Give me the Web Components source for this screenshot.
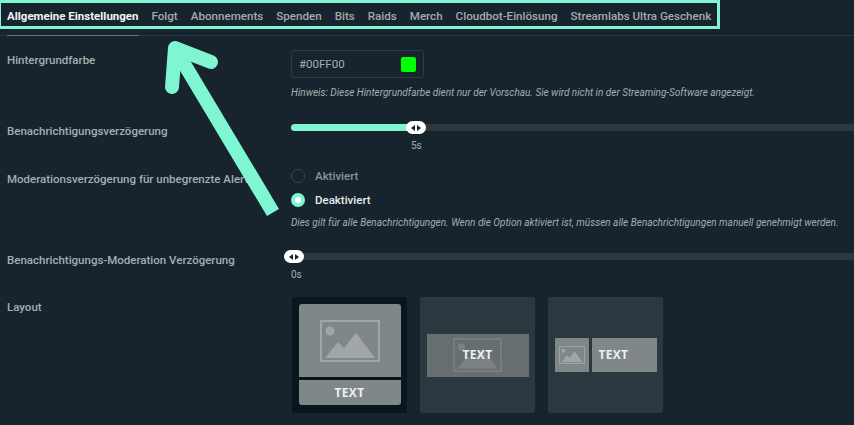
<!DOCTYPE html>
<html lang="de">
<head>
<meta charset="utf-8">
<title>Allgemeine Einstellungen</title>
<style>
  html, body { margin: 0; padding: 0; background: #17242d; }
  body { font-family: Roboto, "Liberation Sans", sans-serif; }
</style>
</head>
<body>

<x-page>
  <x-tabs>
    <x-tab active>Allgemeine Einstellungen</x-tab>
    <x-tab>Folgt</x-tab>
    <x-tab>Abonnements</x-tab>
    <x-tab>Spenden</x-tab>
    <x-tab>Bits</x-tab>
    <x-tab>Raids</x-tab>
    <x-tab>Merch</x-tab>
    <x-tab>Cloudbot-Einlösung</x-tab>
    <x-tab>Streamlabs Ultra Geschenk</x-tab>
  </x-tabs>

  <x-row label="Hintergrundfarbe" style="margin-top:14px">
    <x-color-input value="#00FF00"></x-color-input>
    <x-hint style="margin-top:8px">Hinweis: Diese Hintergrundfarbe dient nur der Vorschau. Sie wird nicht in der Streaming-Software angezeigt.</x-hint>
  </x-row>

  <x-row label="Benachrichtigungsverzögerung" style="margin-top:21px">
    <x-slider percent="125" value="5s"></x-slider>
  </x-row>

  <x-row label="Moderationsverzögerung für unbegrenzte Alerts" style="margin-top:16px">
    <x-radio>Aktiviert</x-radio>
    <x-radio checked style="margin-top:10px">Deaktiviert</x-radio>
    <x-hint style="margin-top:9px">Dies gilt für alle Benachrichtigungen. Wenn die Option aktiviert ist, müssen alle Benachrichtigungen manuell genehmigt werden.</x-hint>
  </x-row>

  <x-row label="Benachrichtigungs-Moderation Verzögerung" style="margin-top:20px">
    <x-slider percent="0" value="0s"></x-slider>
  </x-row>

  <x-row label="Layout" style="margin-top:15px">
    <x-layout-picker>
      <x-layout-card variant="above" selected></x-layout-card>
      <x-layout-card variant="banner"></x-layout-card>
      <x-layout-card variant="side"></x-layout-card>
    </x-layout-picker>
  </x-row>

  <x-arrow></x-arrow>
</x-page>

<script>
// small landscape picture used by all three layout previews
function pictureIcon(opacity) {
  return `<svg viewBox="0 0 60 42" fill="none" style="display:block;width:100%;height:100%;opacity:${opacity}">
    <rect x="1" y="1" width="58" height="40" stroke="#a1a7a9" stroke-width="2"/>
    <circle cx="10" cy="11" r="4.5" fill="#a1a7a9"/>
    <path d="M5 38 L18 22 L24 28 L36 13 L55 38 Z" fill="#a1a7a9"/>
  </svg>`;
}

class XPage extends HTMLElement {
  constructor() {
    super();
    this.attachShadow({ mode: 'open' }).innerHTML = `
<style>
  :host { display: block; position: relative; width: 854px; height: 425px; overflow: hidden; background: #17242d; }
</style>
<slot></slot>`;
  }
}

class XTabs extends HTMLElement {
  constructor() {
    super();
    this.attachShadow({ mode: 'open' }).innerHTML = `
<style>
  :host { display: flex; position: relative; height: 35px; padding-left: 7px; gap: 13px; border-bottom: 1px solid #2a373f; }
  .highlight { position: absolute; left: 0; top: 0; width: 720px; height: 29px; box-sizing: border-box; border: solid #7ff5d2; border-width: 3px 3px 3px 1.5px; pointer-events: none; }
</style>
<slot></slot>
<div class="highlight"></div>`;
  }
}

class XTab extends HTMLElement {
  constructor() {
    super();
    this.attachShadow({ mode: 'open' }).innerHTML = `
<style>
  :host { display: block; height: 36px; box-sizing: border-box; padding-top: 9px; font: 500 11.6px/14px Roboto, sans-serif; color: #a3aaae; white-space: nowrap; }
  :host([active]) { font: 700 11.5px/14px Roboto, sans-serif; color: #f2f4f4; border-bottom: 1px solid #6a757b; }
</style>
<slot></slot>`;
  }
}

class XRow extends HTMLElement {
  constructor() {
    super();
    this.attachShadow({ mode: 'open' }).innerHTML = `
<style>
  :host { display: grid; grid-template-columns: 284px 1fr; padding-left: 7px; }
  .label { padding-top: 3px; font: 500 11.5px/14px Roboto, sans-serif; color: #a6adb1; white-space: nowrap; }
</style>
<div class="label"></div>
<div class="value"><slot></slot></div>`;
    this.shadowRoot.querySelector('.label').textContent = this.getAttribute('label');
  }
}

class XColorInput extends HTMLElement {
  constructor() {
    super();
    const value = this.getAttribute('value');
    this.attachShadow({ mode: 'open' }).innerHTML = `
<style>
  :host { display: flex; align-items: center; justify-content: space-between; box-sizing: border-box; width: 133px; height: 28px; padding: 0 7px; border: 1px solid #2e3b43; border-radius: 3px; font: 400 11.5px/14px Roboto, sans-serif; color: #a6adb1; }
  .swatch { width: 15px; height: 15px; border-radius: 2px; background: #00ff00; }
</style>
<span>${value}</span>
<span class="swatch"></span>`;
  }
}

class XHint extends HTMLElement {
  constructor() {
    super();
    this.attachShadow({ mode: 'open' }).innerHTML = `
<style>
  :host { display: block; font: italic 400 10px/14px Roboto, sans-serif; color: #a6adb1; white-space: nowrap; }
</style>
<slot></slot>`;
  }
}

class XSlider extends HTMLElement {
  constructor() {
    super();
    const px = Number(this.getAttribute('percent'));
    this.attachShadow({ mode: 'open' }).innerHTML = `
<style>
  :host { display: block; }
  .track { position: relative; height: 7px; margin: 3px 0; background: #2c3840; border-radius: 4px 0 0 4px; }
  .fill { height: 100%; background: #7ff5d2; border-radius: 4px 0 0 4px; }
  .thumb { position: absolute; top: -3px; display: flex; align-items: center; justify-content: center; gap: 2px; width: 20px; height: 13px; margin-left: -10px; background: #fff; border-radius: 7px; }
  .thumb i { width: 0; height: 0; border: 3px solid transparent; }
  .thumb i:first-child { border-left: 0; border-right: 4px solid #17242d; }
  .thumb i:last-child { border-right: 0; border-left: 4px solid #17242d; }
  .value { display: inline-block; margin-top: 4px; font: 400 10px/14px Roboto, sans-serif; color: #a6adb1; }
</style>
<div class="track">
  <div class="fill" style="width:${px}px"></div>
  <div class="thumb" style="left:${px ? px : 3}px"><i></i><i></i></div>
</div>
<div class="value" style="margin-left:${px ? px - 5 : 0}px">${this.getAttribute('value')}</div>`;
  }
}

class XRadio extends HTMLElement {
  constructor() {
    super();
    this.attachShadow({ mode: 'open' }).innerHTML = `
<style>
  :host { display: flex; align-items: center; gap: 10px; height: 14px; font: 500 11.5px/14px Roboto, sans-serif; color: #8a9398; }
  :host([checked]) { color: #e9ecec; }
  .dot { box-sizing: border-box; width: 14px; height: 14px; border-radius: 50%; border: 1px solid #3a464e; }
  :host([checked]) .dot { border: 4px solid #7ff5d2; background: #fff; }
</style>
<span class="dot"></span>
<span><slot></slot></span>`;
  }
}

class XLayoutPicker extends HTMLElement {
  constructor() {
    super();
    this.attachShadow({ mode: 'open' }).innerHTML = `
<style>
  :host { display: flex; gap: 13px; padding-left: 1px; }
</style>
<slot></slot>`;
  }
}

class XLayoutCard extends HTMLElement {
  constructor() {
    super();
    const variant = this.getAttribute('variant');
    const bodies = {
      above: `<div class="above">
        <div class="pic"><div class="icon">${pictureIcon(1)}</div></div>
        <div class="text">TEXT</div>
      </div>`,
      banner: `<div class="banner">
        <div class="icon">${pictureIcon(0.35)}</div>
        <div class="text">TEXT</div>
      </div>`,
      side: `<div class="side">
        <div class="pic"><div class="icon">${pictureIcon(1)}</div></div>
        <div class="text">TEXT</div>
      </div>`
    };
    this.attachShadow({ mode: 'open' }).innerHTML = `
<style>
  :host { display: flex; box-sizing: border-box; width: 115px; height: 116px; padding: 7px 6.5px; background: #2c3840; border-radius: 3px; }
  :host([selected]) { background: #0a161e; }
  .text { display: flex; align-items: center; font: 700 12px/14px "Open Sans", sans-serif; letter-spacing: .3px; color: #eef0f0; background: #7f8789; }
  .pic { display: flex; align-items: center; justify-content: center; background: #7f8789; }
  .above { flex: 1; display: flex; flex-direction: column; gap: 3px; }
  .above .pic { height: 73px; border-radius: 3px 3px 0 0; }
  .above .icon { width: 60px; height: 42px; }
  .above .text { height: 25px; justify-content: center; border-radius: 0 0 3px 3px; }
  .banner { position: relative; flex: 1; display: flex; align-items: center; justify-content: center; align-self: center; height: 43px; background: #666e70; }
  .banner .icon { width: 49px; height: 34px; }
  .banner .text { position: absolute; inset: 0; justify-content: center; background: none; }
  .side { flex: 1; display: flex; align-self: center; gap: 3px; height: 34px; }
  .side .pic { width: 34px; }
  .side .icon { width: 26px; height: 18px; }
  .side .text { flex: 1; padding-left: 7px; }
</style>
${bodies[variant]}`;
  }
}

class XArrow extends HTMLElement {
  constructor() {
    super();
    this.attachShadow({ mode: 'open' }).innerHTML = `
<style>
  :host { position: absolute; inset: 0; display: block; pointer-events: none; }
  svg { display: block; }
</style>
<svg width="854" height="425" viewBox="0 0 854 425" fill="none" stroke="#7ff5d2" stroke-width="14">
  <path d="M273 212.5 L177 52"/>
  <path d="M172 87 L175 48 L211 62" stroke-linecap="round" stroke-linejoin="round"/>
</svg>`;
  }
}

customElements.define('x-page', XPage);
customElements.define('x-tabs', XTabs);
customElements.define('x-tab', XTab);
customElements.define('x-row', XRow);
customElements.define('x-color-input', XColorInput);
customElements.define('x-hint', XHint);
customElements.define('x-slider', XSlider);
customElements.define('x-radio', XRadio);
customElements.define('x-layout-picker', XLayoutPicker);
customElements.define('x-layout-card', XLayoutCard);
customElements.define('x-arrow', XArrow);
</script>
</body>
</html>
